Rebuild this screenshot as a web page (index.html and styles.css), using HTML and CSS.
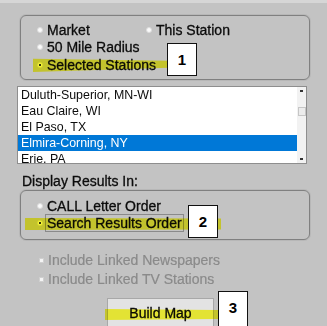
FILE: index.html
```html
<!DOCTYPE html>
<html>
<head>
<meta charset="utf-8">
<link rel="stylesheet" href="styles.css">
</head>
<body>
<div class="screen">
  <div class="topbar"></div>

  <div class="group g1">
    <div class="row">
      <span class="opt col1"><span class="radio"></span>Market</span>
      <span class="opt"><span class="radio"></span>This Station</span>
    </div>
    <div class="row">
      <span class="opt"><span class="radio"></span>50 Mile Radius</span>
    </div>
    <div class="row">
      <span class="opt"><span class="radio on"></span>Selected Stations</span>
    </div>
  </div>

  <div class="list">
    <div class="items">
      <div class="item">Duluth-Superior, MN-WI</div>
      <div class="item">Eau Claire, WI</div>
      <div class="item">El Paso, TX</div>
      <div class="item sel">Elmira-Corning, NY</div>
      <div class="item">Erie, PA</div>
    </div>
    <div class="scrollbar">
      <div class="arrow up"></div>
      <div class="thumb"></div>
      <div class="arrow down"></div>
    </div>
  </div>

  <div class="caption">Display Results In:</div>

  <div class="group g2">
    <div class="row">
      <span class="opt"><span class="radio"></span>CALL Letter Order</span>
    </div>
    <div class="row">
      <span class="opt"><span class="radio on"></span><span class="focus">Search Results Order</span></span>
    </div>
  </div>

  <div class="checks">
    <div class="check-row"><span class="box"></span>Include Linked Newspapers</div>
    <div class="check-row"><span class="box"></span>Include Linked TV Stations</div>
  </div>

  <div class="btn-row">
    <button class="btn">Build Map</button>
  </div>

  <div class="hl hl1"></div>
  <div class="hl hl2"></div>
  <div class="hl hl3"></div>

  <div class="tag tag1">1</div>
  <div class="tag tag2">2</div>
  <div class="tag tag3">3</div>
</div>
</body>
</html>
```
FILE: styles.css
```css
html, body {
  margin: 0;
  padding: 0;
  background: #c3c3c3;
  overflow: hidden;
}
.screen {
  position: relative;
  width: 327px;
  height: 326px;
  overflow: hidden;
  font-family: "Liberation Sans", Arial, sans-serif;
  font-size: 14px;
  color: #0c0c0c;
}
.topbar {
  height: 3px;
  background: #d6d6d6;
}
.group {
  box-sizing: border-box;
  margin-left: 20px;
  width: 290px;
  border: 1px solid #808080;
  border-radius: 6px;
  box-shadow: 0 0 0 1px rgba(0, 0, 0, 0.06);
  padding-left: 16px;
}
.g1 {
  margin-top: 12px;
  height: 65px;
  padding-top: 5px;
}
.row {
  display: flex;
  align-items: center;
  height: 17.5px;
}
.opt {
  display: flex;
  align-items: center;
  white-space: nowrap;
  -webkit-text-stroke: 0.3px #0c0c0c;
}
.col1 {
  width: 109px;
}
.radio {
  box-sizing: border-box;
  width: 6px;
  height: 6px;
  border-radius: 50%;
  background: #fafafa;
  border: 1px solid #dcdcdc;
  margin-right: 4px;
  flex: none;
}
.radio.on {
  background: radial-gradient(circle, #333 0 1px, #fafafa 1.5px);
}
.list {
  box-sizing: border-box;
  display: flex;
  margin-top: 6px;
  margin-left: 17px;
  width: 290px;
  height: 78px;
  border: 1px solid #8e8e8e;
  background: #fff;
  overflow: hidden;
}
.items {
  flex: 1;
  font-size: 12.4px;
}
.item {
  height: 16px;
  line-height: 16px;
  padding-left: 3px;
  white-space: nowrap;
}
.item.sel {
  background: #0078d7;
  color: #fff;
}
.scrollbar {
  width: 9px;
  background: #f2f2f2;
  display: flex;
  flex-direction: column;
  align-items: center;
  position: relative;
}
.arrow {
  width: 7px;
  height: 6px;
  position: relative;
}
.arrow::after {
  content: "";
  position: absolute;
  left: 2px;
  top: 2px;
  width: 3px;
  height: 2px;
  background: #333;
}
.up {
  margin-top: 1px;
}
.thumb {
  box-sizing: border-box;
  width: 8px;
  height: 9px;
  margin-top: 13px;
  background: #ececec;
  border: 1px solid #c6c6c6;
}
.down {
  margin-top: auto;
  margin-bottom: 1px;
}
.caption {
  margin-top: 9px;
  margin-left: 22px;
  height: 17px;
  line-height: 17px;
  -webkit-text-stroke: 0.3px #0c0c0c;
}
.g2 {
  margin-top: 0;
  height: 50px;
  padding-top: 6px;
}
.focus {
  border: 1px solid #8a8a8a;
  margin-left: -2px;
  padding: 0 1px 0 1px;
  line-height: 16px;
}
.checks {
  margin-top: 10.5px;
  padding-left: 39px;
  color: #8a8a8a;
}
.check-row {
  display: flex;
  align-items: center;
  height: 19px;
  white-space: nowrap;
  -webkit-text-stroke: 0.2px #8a8a8a;
}
.box {
  box-sizing: border-box;
  width: 5px;
  height: 5px;
  background: #f4f4f4;
  border: 1px solid #d0d0d0;
  margin-right: 4px;
}
.btn-row {
  margin-top: 9.5px;
  padding-left: 107px;
}
.btn {
  box-sizing: border-box;
  width: 107px;
  height: 30px;
  padding: 0;
  background: #e3e3e3;
  border: 1px solid #a8a8a8;
  font-family: "Liberation Sans", Arial, sans-serif;
  font-size: 14px;
  color: #0c0c0c;
  -webkit-text-stroke: 0.3px #0c0c0c;
}
.hl {
  position: absolute;
  background: #ffff3a;
  mix-blend-mode: multiply;
}
.hl1 {
  left: 33px;
  top: 58px;
  width: 136px;
  height: 14px;
  clip-path: polygon(0 5%, 100% 20%, 100% 70%, 0 100%);
}
.hl2 {
  left: 25px;
  top: 218px;
  width: 196px;
  height: 12px;
  clip-path: polygon(0 0, 100% 5%, 100% 95%, 0 100%);
}
.hl3 {
  left: 105px;
  top: 309px;
  width: 113px;
  height: 11px;
  clip-path: polygon(0 0, 100% 10%, 100% 90%, 0 100%);
}
.tag {
  position: absolute;
  box-sizing: border-box;
  background: #fff;
  border: 1px solid #111;
  font-weight: bold;
  font-size: 15px;
  display: flex;
  align-items: center;
  justify-content: center;
  color: #000;
}
.tag1 {
  left: 167px;
  top: 43px;
  width: 30px;
  height: 33px;
}
.tag2 {
  left: 188px;
  top: 205px;
  width: 30px;
  height: 33px;
}
.tag3 {
  left: 218px;
  top: 291px;
  width: 30px;
  height: 40px;
  align-items: flex-start;
  padding-top: 7px;
}
```
